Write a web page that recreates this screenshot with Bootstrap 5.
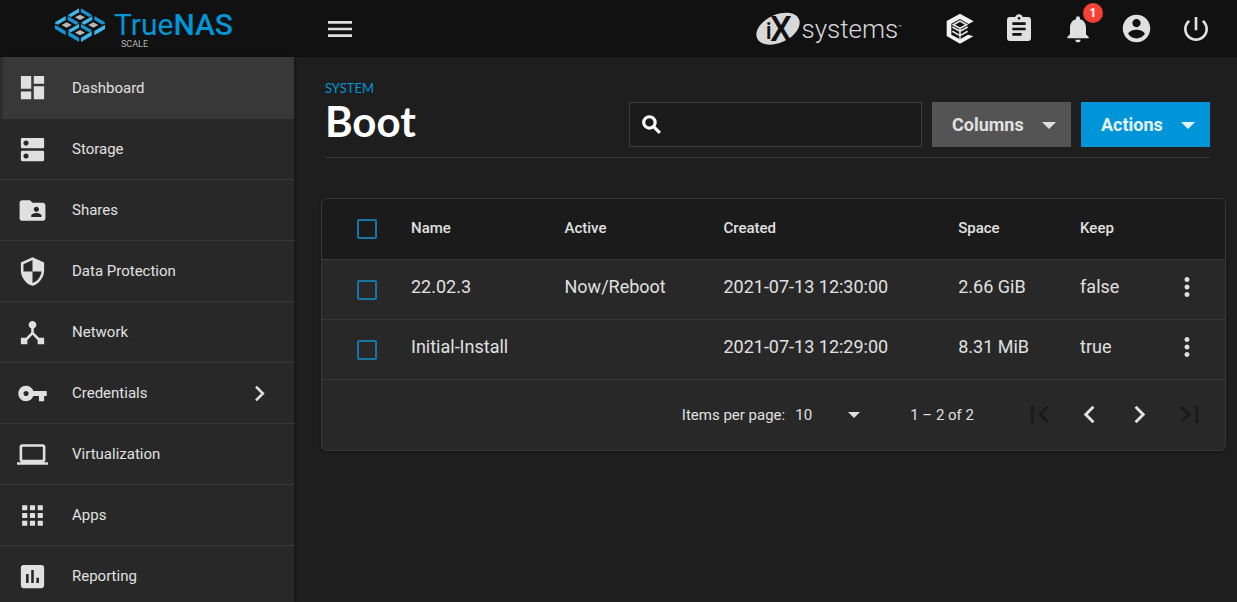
<!DOCTYPE html>
<html lang="en">
<head>
<meta charset="utf-8">
<meta name="viewport" content="width=device-width, initial-scale=1">
<title>TrueNAS - Boot</title>
<link rel="stylesheet" href="https://cdn.jsdelivr.net/npm/bootstrap@5.3.0/dist/css/bootstrap.min.css">
<style>
  :root { --fg: #e0e0e0; --line: #383838; --blue: #0095d5; }
  body { font-family: Roboto, "Liberation Sans", sans-serif; background: #1e1e1e; color: var(--fg); font-size: 15px; line-height: 20px; }
  svg { display: block; fill: currentColor; flex-shrink: 0; }
  .topbar { background: #111; height: 57px; flex-shrink: 0; }
  .brand-area { width: 295px; padding-left: 55px; gap: 9px; flex-shrink: 0; color: var(--blue); }
  .brand-name { font-size: 30px; line-height: 28px; margin-top: 11px; font-weight: 400; }
  .brand-name b { font-weight: 500; }
  .brand-sub { font-size: 9px; line-height: 8px; color: #b5b5b5; padding-left: 7px; margin-top: 1px; }
  .icon-btn { border: 0; background: none; color: var(--fg); padding: 0; display: flex; align-items: center; justify-content: center; }
  .topbar .icon-btn { width: 59px; height: 57px; position: relative; }
  .ix-logo { color: #d8d8d8; margin-right: 28px; }
  .ix-word { font-size: 26px; line-height: 52px; font-weight: 300; }
  .ix-tm { font-size: 6px; line-height: 8px; align-self: flex-start; margin-top: 20px; }
  .alert-count { position: absolute; left: 35px; top: 3px; width: 20px; height: 20px; border-radius: 10px; background: #f44336; color: #fff; font-size: 12px; font-weight: 700; line-height: 20px; }
  .side { width: 294px; background: #282828; flex-shrink: 0; overflow: hidden; box-shadow: 1px 0 2px #151515; }
  .side a { height: 61px; border-bottom: 1px solid var(--line); color: var(--fg); padding: 0 19px 0 17px; gap: 24px; flex-shrink: 0; }
  .side a.active { height: 62px; background: #383838; border-left: 3px solid #2d2d2d; padding-left: 14px; }
  .page { padding: 0 11px 0 27px; min-width: 0; }
  .page-head { margin: 21px 16px 0 4px; padding-bottom: 10px; border-bottom: 1px solid var(--line); gap: 10px; }
  .page-title { margin-bottom: 3px; }
  .crumb { color: var(--blue); font: 400 13px/20px Lato, sans-serif; text-decoration: none; display: block; }
  h1 { font: 700 42px/46px Lato, sans-serif; color: #fff; margin: 0; }
  .search-box { width: 293px; height: 45px; border: 1px solid #3c3c3c; background: #1b1b1b; padding-left: 9px; }
  .search-box svg { fill: none; stroke: #fff; stroke-width: 3; }
  .search-box input { background: none; border: 0; color: var(--fg); outline: 0; min-width: 0; }
  .drop-btn { height: 45px; border: 0; border-radius: 0; padding: 0 11px 0 20px; font-size: 18px; font-weight: 700; color: var(--fg); background: #545454; display: flex; align-items: center; justify-content: space-between; width: 139px; }
  .drop-btn.main-action { background: #0095d8; color: #e4f5ff; width: 129px; }
  .list-card { margin-top: 40px; border: 1px solid var(--line); border-radius: 6px; background: #282828; overflow: hidden; box-shadow: 0 1px 3px #141414; }
  .boot-table { width: 100%; table-layout: fixed; font-size: 18px; }
  .boot-table th { font-size: 15px; font-weight: 500; background: #1b1b1b; }
  .boot-table th, .boot-table td { height: 60px; padding: 0 0 4px; border-bottom: 1px solid var(--line); vertical-align: middle; }
  .boot-table th { padding-bottom: 1px; }
  .boot-table th:first-child, .boot-table td:first-child { padding: 0 0 0 35px; }
  .pick { appearance: none; display: block; width: 20px; height: 20px; margin: 1px 0 0; border: 2px solid #1877a2; border-radius: 2px; }
  .pick:checked { background: #1877a2; }
  .boot-table .icon-btn { margin: 0 auto; }
  .pager { height: 70px; padding-right: 11px; }
  .pager .icon-btn { width: 50px; height: 50px; }
  .pager .icon-btn:disabled { color: #1b1b1b; }
  .pager select { appearance: none; border: 0; color: var(--fg); width: 65px; margin: 0 50px 0 10px; padding: 0; background: url("data:image/svg+xml,%3Csvg xmlns='http://www.w3.org/2000/svg' viewBox='0 0 12 6'%3E%3Cpath d='M0 0h12L6 6z' fill='%23e0e0e0'/%3E%3C/svg%3E") right center / 12px 6px no-repeat; }
  .range-label { margin-right: 40px; }
</style>
</head>
<body class="d-flex flex-column vh-100 overflow-hidden">

<header class="topbar d-flex">
  <a href="#" class="brand-area d-flex text-decoration-none" aria-label="TrueNAS Scale">
    <svg class="mt-2" width="50" height="34" viewBox="165 24 150 102">
      <defs>
        <g id="cell">
          <path fill="#3fb7ea" d="M-35-8-3-27V-15L-27-1-35-5z"/>
          <path fill="#1593d2" d="M3-27 35-8V-5L27-1 3-15z"/>
          <path fill="#b9b9b9" d="M-15 0 0-8 15 0 0 8z"/>
        </g>
        <path id="frontL" fill="#1593d2" d="M-35-1-3 18V31L-35 12z"/>
        <path id="frontR" fill="#3fb7ea" d="M35-1 3 18V31L35 12z"/>
      </defs>
      <use href="#cell" x="240" y="52"/><use href="#cell" x="200" y="75"/>
      <use href="#cell" x="280" y="75"/><use href="#cell" x="240" y="98"/>
      <use href="#frontL" x="200" y="75"/><use href="#frontR" x="280" y="75"/>
      <use href="#frontL" x="240" y="95"/><use href="#frontR" x="240" y="95"/>
    </svg>
    <div>
      <div class="brand-name">True<b>NAS</b></div>
      <div class="brand-sub">SCALE</div>
    </div>
  </a>
  <div class="d-flex flex-grow-1 align-items-center" style="padding: 0 12px 0 15px">
    <button class="icon-btn me-auto" aria-label="Menu"><svg width="32" height="32" viewBox="0 0 24 24"><path d="M3 18h18v-2H3v2zm0-5h18v-2H3v2zm0-7v2h18V6H3z"/></svg></button>
    <a href="#" class="ix-logo d-flex align-items-center text-decoration-none" aria-label="iXsystems">
      <svg width="45" height="34" viewBox="49 31 135 102" overflow="visible">
        <ellipse cx="115" cy="81" rx="69" ry="42" transform="rotate(-25 115 81)"/>
        <g fill="#111" font-family="Roboto, sans-serif"><text x="78" y="112" font-size="70" font-weight="500">i</text><text x="91" y="118" font-size="104" font-weight="500">X</text></g>
      </svg>
      <span class="ix-word">systems</span><span class="ix-tm">™</span>
    </a>
    <button class="icon-btn" aria-label="TrueCommand">
      <svg width="28" height="32" viewBox="47 37 84 96">
        <path fill="#f2f2f2" d="M89 39l41 23-15 8-26-15-26 14v33l26 14 24-14 16 5-40 22-40-23V61z"/>
        <path fill="none" stroke="#e0e0e0" stroke-width="5" d="M89 61l20 11-20 11-20-11zM66 79l23 13 23-13M66 92l23 13 23-13M89 84v30"/>
      </svg>
    </button>
    <button class="icon-btn" aria-label="Tasks"><svg width="32" height="32" viewBox="0 0 24 24"><path d="M19 3h-4.180C14.400 1.840 13.300 1 12 1c-1.300 0-2.400.840-2.820 2H5c-1.100 0-2 .900-2 2v14c0 1.100.900 2 2 2h14c1.100 0 2-.900 2-2V5c0-1.100-.900-2-2-2zm-7 0c.550 0 1 .450 1 1s-.450 1-1 1-1-.450-1-1 .450-1 1-1zm2 14H7v-2h7v2zm3-4H7v-2h10v2zm0-4H7V7h10v2z"/></svg></button>
    <button class="icon-btn" aria-label="Alerts"><svg width="32" height="32" viewBox="0 0 24 24"><path d="M12 22c1.100 0 2-.900 2-2h-4c0 1.100.890 2 2 2zm6-6v-5c0-3.070-1.640-5.640-4.500-6.320V4c0-.830-.670-1.500-1.500-1.500s-1.500.670-1.500 1.500v.680C7.630 5.360 6 7.920 6 11v5l-2 2v1h16v-1l-2-2z"/></svg><span class="alert-count">1</span></button>
    <button class="icon-btn" aria-label="Account"><svg width="33" height="33" viewBox="0 0 24 24"><path d="M12 2C6.480 2 2 6.480 2 12s4.480 10 10 10 10-4.480 10-10S17.520 2 12 2zm0 3c1.660 0 3 1.340 3 3s-1.340 3-3 3-3-1.340-3-3 1.340-3 3-3zm0 14.200c-2.500 0-4.710-1.280-6-3.220.030-1.990 4-3.080 6-3.080 1.990 0 5.970 1.090 6 3.080-1.290 1.940-3.500 3.220-6 3.220z"/></svg></button>
    <button class="icon-btn" aria-label="Power"><svg width="32" height="32" viewBox="0 0 24 24"><path d="M13 3h-2v10h2V3zm4.830 2.170l-1.420 1.420C17.990 7.860 19 9.810 19 12c0 3.870-3.130 7-7 7s-7-3.130-7-7c0-2.190 1.010-4.140 2.580-5.420L6.170 5.170C4.230 6.820 3 9.260 3 12c0 4.970 4.030 9 9 9s9-4.030 9-9c0-2.740-1.230-5.180-3.170-6.830z"/></svg></button>
  </div>
</header>

<div class="d-flex flex-grow-1" style="min-height: 0">
  <nav class="side d-flex flex-column">
    <a href="#" class="active d-flex align-items-center text-decoration-none"><svg width="31" height="31" viewBox="0 0 24 24"><path d="M3 13h8V3H3v10zm0 8h8v-6H3v6zm10 0h8V11h-8v10zm0-18v6h8V3h-8z"/></svg>Dashboard</a>
    <a href="#" class="d-flex align-items-center text-decoration-none"><svg width="31" height="31" viewBox="0 0 24 24"><path d="M20 13H4c-.550 0-1 .450-1 1v6c0 .550.450 1 1 1h16c.550 0 1-.450 1-1v-6c0-.550-.450-1-1-1zM7 19c-1.100 0-2-.900-2-2s.900-2 2-2 2 .900 2 2-.900 2-2 2zM20 3H4c-.550 0-1 .450-1 1v6c0 .550.450 1 1 1h16c.550 0 1-.450 1-1V4c0-.550-.450-1-1-1zM7 9c-1.100 0-2-.900-2-2s.900-2 2-2 2 .900 2 2-.900 2-2 2z"/></svg>Storage</a>
    <a href="#" class="d-flex align-items-center text-decoration-none"><svg width="31" height="31" viewBox="0 0 24 24"><path d="M20 6h-8l-2-2H4c-1.100 0-1.990.900-1.990 2L2 18c0 1.100.900 2 2 2h16c1.100 0 2-.900 2-2V8c0-1.100-.900-2-2-2zm-5 3c1.100 0 2 .900 2 2s-.900 2-2 2-2-.900-2-2 .900-2 2-2zm4 8h-8v-1c0-1.330 2.670-2 4-2s4 .670 4 2v1z"/></svg>Shares</a>
    <a href="#" class="d-flex align-items-center text-decoration-none"><svg width="31" height="31" viewBox="0 0 24 24"><path d="M12 1L3 5v6c0 5.550 3.840 10.740 9 12 5.160-1.260 9-6.450 9-12V5l-9-4zm0 10.990h7c-.530 4.120-3.280 7.790-7 8.940V12H5V6.300l7-3.110v8.800z"/></svg>Data Protection</a>
    <a href="#" class="d-flex align-items-center text-decoration-none"><svg width="31" height="31" viewBox="0 0 24 24"><path d="M17 16l-4-4V8.820C14.160 8.400 15 7.300 15 6c0-1.660-1.340-3-3-3S9 4.340 9 6c0 1.300.840 2.400 2 2.820V12l-4 4H3v5h5v-3.050l4-4.200 4 4.200V21h5v-5h-4z"/></svg>Network</a>
    <a href="#" class="d-flex align-items-center text-decoration-none"><svg width="31" height="31" viewBox="0 0 24 24"><path d="M12.650 10C11.830 7.670 9.610 6 7 6c-3.310 0-6 2.690-6 6s2.690 6 6 6c2.610 0 4.830-1.670 5.650-4H17v4h4v-4h2v-4H12.650zM7 14c-1.100 0-2-.900-2-2s.900-2 2-2 2 .900 2 2-.900 2-2 2z"/></svg>Credentials<svg class="ms-auto" width="31" height="31" viewBox="0 0 24 24"><path d="M10 6L8.590 7.410 13.170 12l-4.580 4.590L10 18l6-6z"/></svg></a>
    <a href="#" class="d-flex align-items-center text-decoration-none"><svg width="31" height="31" viewBox="0 0 24 24"><path d="M20 18c1.100 0 1.990-.900 1.990-2L22 6c0-1.100-.900-2-2-2H4c-1.100 0-2 .900-2 2v10c0 1.100.900 2 2 2H0v2h24v-2h-4zM4 6h16v10H4V6z"/></svg>Virtualization</a>
    <a href="#" class="d-flex align-items-center text-decoration-none"><svg width="31" height="31" viewBox="0 0 24 24"><path d="M4 8h4V4H4v4zm6 12h4v-4h-4v4zm-6 0h4v-4H4v4zm0-6h4v-4H4v4zm6 0h4v-4h-4v4zm6-10v4h4V4h-4zm-6 4h4V4h-4v4zm6 6h4v-4h-4v4zm0 6h4v-4h-4v4z"/></svg>Apps</a>
    <a href="#" class="d-flex align-items-center text-decoration-none"><svg width="31" height="31" viewBox="0 0 24 24"><path d="M19 3H5c-1.100 0-2 .900-2 2v14c0 1.100.900 2 2 2h14c1.100 0 2-.900 2-2V5c0-1.100-.900-2-2-2zM9 17H7v-7h2v7zm4 0h-2V7h2v10zm4 0h-2v-4h2v4z"/></svg>Reporting</a>
  </nav>

  <main class="page flex-grow-1">
    <div class="page-head d-flex align-items-end">
      <div class="page-title me-auto">
        <a href="#" class="crumb">SYSTEM</a>
        <h1>Boot</h1>
      </div>
      <div class="search-box d-flex align-items-center">
        <label for="search" aria-label="Search"><svg width="25" height="25" viewBox="0 0 24 24"><circle cx="10" cy="10" r="5.500"/><path d="M14 14l6 6"/></svg></label>
        <input id="search" type="text" class="flex-grow-1">
      </div>
      <button class="drop-btn">Columns<svg width="22" height="22" viewBox="0 0 22 22"><path d="M4 8h14l-7 7z"/></svg></button>
      <button class="drop-btn main-action">Actions<svg width="22" height="22" viewBox="0 0 22 22"><path d="M4 8h14l-7 7z"/></svg></button>
    </div>

    <section class="list-card">
      <table class="boot-table">
        <colgroup><col style="width:89px"><col style="width:17%"><col style="width:17.600%"><col style="width:26%"><col style="width:13.500%"><col><col style="width:76px"></colgroup>
        <thead>
          <tr><th><input type="checkbox" class="pick" aria-label="Select all"></th><th>Name</th><th>Active</th><th>Created</th><th>Space</th><th>Keep</th><th></th></tr>
        </thead>
        <tbody>
          <tr><td><input type="checkbox" class="pick" aria-label="Select 22.02.3"></td><td>22.02.3</td><td>Now/Reboot</td><td>2021-07-13 12:30:00</td><td>2.66 GiB</td><td>false</td>
            <td><button class="icon-btn" aria-label="More"><svg width="30" height="30" viewBox="0 0 24 24"><path d="M12 8c1.100 0 2-.900 2-2s-.900-2-2-2-2 .900-2 2 .900 2 2 2zm0 2c-1.100 0-2 .900-2 2s.900 2 2 2 2-.900 2-2-.900-2-2-2zm0 6c-1.100 0-2 .900-2 2s.900 2 2 2 2-.900 2-2-.900-2-2-2z"/></svg></button></td></tr>
          <tr><td><input type="checkbox" class="pick" aria-label="Select Initial-Install"></td><td>Initial-Install</td><td></td><td>2021-07-13 12:29:00</td><td>8.31 MiB</td><td>true</td>
            <td><button class="icon-btn" aria-label="More"><svg width="30" height="30" viewBox="0 0 24 24"><path d="M12 8c1.100 0 2-.900 2-2s-.900-2-2-2-2 .900-2 2 .900 2 2 2zm0 2c-1.100 0-2 .900-2 2s.900 2 2 2 2-.900 2-2-.900-2-2-2zm0 6c-1.100 0-2 .900-2 2s.900 2 2 2 2-.900 2-2-.900-2-2-2z"/></svg></button></td></tr>
        </tbody>
      </table>
      <div class="pager d-flex align-items-center justify-content-end">
        <label for="per-page">Items per page:</label>
        <select id="per-page"><option>10</option><option>50</option><option>100</option></select>
        <span class="range-label">1 – 2 of 2</span>
        <button class="icon-btn" disabled aria-label="First page"><svg width="35" height="35" viewBox="0 0 24 24"><path d="M18.410 16.590L13.820 12l4.590-4.590L17 6l-6 6 6 6zM6 6h2v12H6z"/></svg></button>
        <button class="icon-btn" aria-label="Previous page"><svg width="35" height="35" viewBox="0 0 24 24"><path d="M15.410 7.410L14 6l-6 6 6 6 1.410-1.410L10.830 12z"/></svg></button>
        <button class="icon-btn" aria-label="Next page"><svg width="35" height="35" viewBox="0 0 24 24"><path d="M10 6L8.590 7.410 13.170 12l-4.580 4.590L10 18l6-6z"/></svg></button>
        <button class="icon-btn" disabled aria-label="Last page"><svg width="35" height="35" viewBox="0 0 24 24"><path d="M5.590 7.410L10.180 12l-4.590 4.590L7 18l6-6-6-6zM16 6h2v12h-2z"/></svg></button>
      </div>
    </section>
  </main>
</div>

<script src="https://cdn.jsdelivr.net/npm/bootstrap@5.3.0/dist/js/bootstrap.bundle.min.js"></script>
</body>
</html>
